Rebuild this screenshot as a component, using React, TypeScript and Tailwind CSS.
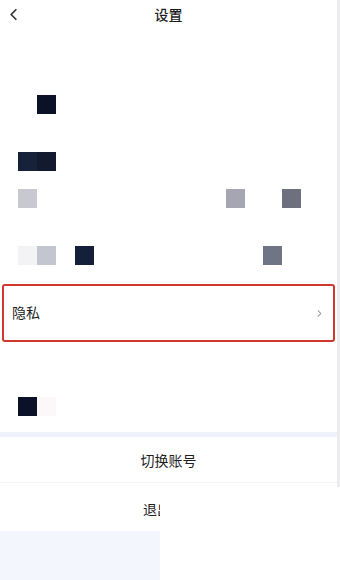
import { ChevronLeft, ChevronRight } from "lucide-react";

const font = { fontFamily: '"Noto Sans CJK SC", "Noto Sans", sans-serif' };

function Cell({ className }: { className: string }) {
  return <div className={`h-[19px] w-[19px] shrink-0 ${className}`} />;
}

export default function App() {
  return (
    <div className="w-[340px] h-[580px] bg-white overflow-hidden flex flex-col text-[#1f1f1f]" style={font}>
      <div className="h-[487px] shrink-0 border-r-[3px] border-[#ececee] flex flex-col">
        {/* header */}
        <header className="h-[30px] relative flex items-center justify-center">
          <ChevronLeft className="absolute left-[4px] top-[5px] w-[19px] h-[19px] text-[#333]" strokeWidth={2.2} />
          <span className="text-[14px] font-medium leading-none -mt-[2px]">设置</span>
        </header>

        <div className="h-[65px]" />
        <div className="flex h-[19px] pl-[37px]">
          <Cell className="bg-[#0b1228]" />
        </div>

        <div className="h-[38px]" />
        <div className="flex h-[19px] pl-[18px]">
          <Cell className="bg-[#16213a]" />
          <Cell className="bg-[#111a2e]" />
        </div>

        <div className="h-[18px]" />
        <div className="flex h-[19px] pl-[18px]">
          <Cell className="bg-[#c8c9d0]" />
          <div className="w-[189px]" />
          <Cell className="bg-[#a5a6b1]" />
          <div className="w-[37px]" />
          <Cell className="bg-[#6e7080]" />
        </div>

        <div className="h-[38px]" />
        <div className="flex h-[19px] pl-[18px]">
          <Cell className="bg-[#f3f3f5]" />
          <Cell className="bg-[#c4c6cf]" />
          <div className="w-[19px]" />
          <Cell className="bg-[#14203a]" />
          <div className="w-[169px]" />
          <Cell className="bg-[#6f7585]" />
        </div>

        <div className="h-[19px]" />
        <div className="mx-[2px] w-[333px] h-[58px] border-[2.5px] border-[#d0382f] rounded-[3px] flex items-center justify-between pl-[8px] pr-[8px]">
          <span className="text-[14px] leading-none -mt-[2px]">隐私</span>
          <ChevronRight className="w-[11px] h-[11px] text-[#888]" strokeWidth={2.2} />
        </div>

        <div className="h-[55px]" />
        <div className="flex h-[19px] pl-[18px]">
          <Cell className="bg-[#0b1228]" />
          <Cell className="bg-[#fcf7f8]" />
        </div>

        <div className="h-[16px]" />
        <div className="h-[5px] bg-[#eef2fa]" />
        <div className="h-[46px] flex items-center justify-center border-b border-[#f4f4f6]">
          <span className="text-[14px] leading-none">切换账号</span>
        </div>
      </div>

      <div className="flex flex-1">
        <div className="w-[160px] flex flex-col">
          <div className="h-[44px] overflow-hidden pl-[143px] flex items-center">
            <span className="text-[14px] leading-none whitespace-nowrap">退出</span>
          </div>
          <div className="flex-1 bg-[#f3f6fc]" />
        </div>
        <div className="flex-1 bg-white" />
      </div>
    </div>
  );
}
